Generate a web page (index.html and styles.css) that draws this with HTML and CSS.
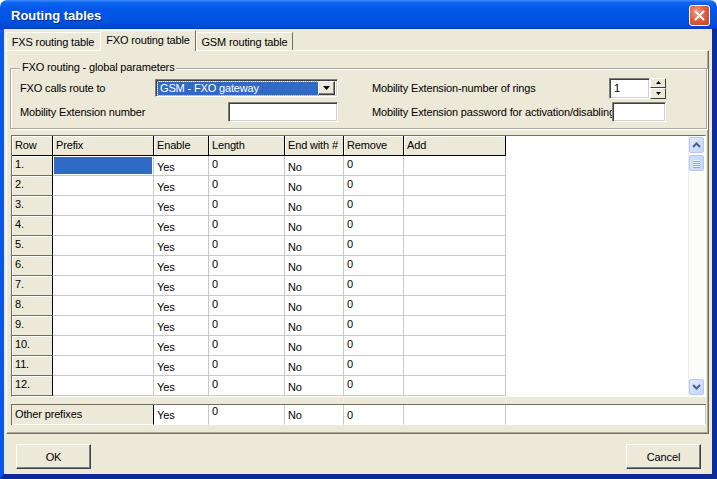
FILE: index.html
```html
<!DOCTYPE html>
<html>
<head>
<meta charset="utf-8">
<title>Routing tables</title>
<link rel="stylesheet" href="styles.css">
</head>
<body>
<div class="window">
  <div class="titlebar">
    <span class="title">Routing tables</span>
    <span class="close"><svg width="11" height="11" viewBox="0 0 11 11"><path d="M1.5 1.5 L9.5 9.5 M9.5 1.5 L1.5 9.5" stroke="#fff" stroke-width="2" stroke-linecap="round"/></svg></span>
  </div>
  <div class="frame">
    <div class="client">
      <div class="tabs">
        <div class="tab t1">FXS routing table</div>
        <div class="tab t2 active">FXO routing table</div>
        <div class="tab t3">GSM routing table</div>
      </div>
      <div class="panel">
        <div class="group">
          <span class="legend">FXO routing - global parameters</span>
          <div class="grow">
            <span class="lbl w135">FXO calls route to</span>
            <div class="combo">
              <span class="combo-sel">GSM - FXO gateway</span>
              <span class="combo-btn"><svg width="7" height="4" viewBox="0 0 7 4"><path d="M0 0 H7 L3.5 4 Z" fill="#000"/></svg></span>
            </div>
            <span class="lbl w237 ml">Mobility Extension-number of rings</span>
            <div class="spin">
              <div class="edit spin-edit">1</div>
              <div class="spin-btns">
                <span class="sbtn"><svg width="5" height="3" viewBox="0 0 5 3"><path d="M0 3 H5 L2.5 0 Z" fill="#000"/></svg></span>
                <span class="sbtn"><svg width="5" height="3" viewBox="0 0 5 3"><path d="M0 0 H5 L2.5 3 Z" fill="#000"/></svg></span>
              </div>
            </div>
          </div>
          <div class="grow">
            <span class="lbl w208">Mobility Extension number</span>
            <div class="edit w110"></div>
            <span class="lbl w240 ml clip">Mobility Extension password for activation/disabling</span>
            <div class="edit w54"></div>
          </div>
        </div>

        <div class="gridbox">
          <div class="gridarea">
            <div class="cells">
              <div class="h">Row</div><div class="h">Prefix</div><div class="h">Enable</div><div class="h">Length</div><div class="h">End with #</div><div class="h">Remove</div><div class="h">Add</div>

              <div class="n">1.</div><div class="c sel"></div><div class="c y">Yes</div><div class="c e">0</div><div class="c y">No</div><div class="c e">0</div><div class="c"></div>
              <div class="n">2.</div><div class="c"></div><div class="c y">Yes</div><div class="c e">0</div><div class="c y">No</div><div class="c e">0</div><div class="c"></div>
              <div class="n">3.</div><div class="c"></div><div class="c y">Yes</div><div class="c e">0</div><div class="c y">No</div><div class="c e">0</div><div class="c"></div>
              <div class="n">4.</div><div class="c"></div><div class="c y">Yes</div><div class="c e">0</div><div class="c y">No</div><div class="c e">0</div><div class="c"></div>
              <div class="n">5.</div><div class="c"></div><div class="c y">Yes</div><div class="c e">0</div><div class="c y">No</div><div class="c e">0</div><div class="c"></div>
              <div class="n">6.</div><div class="c"></div><div class="c y">Yes</div><div class="c e">0</div><div class="c y">No</div><div class="c e">0</div><div class="c"></div>
              <div class="n">7.</div><div class="c"></div><div class="c y">Yes</div><div class="c e">0</div><div class="c y">No</div><div class="c e">0</div><div class="c"></div>
              <div class="n">8.</div><div class="c"></div><div class="c y">Yes</div><div class="c e">0</div><div class="c y">No</div><div class="c e">0</div><div class="c"></div>
              <div class="n">9.</div><div class="c"></div><div class="c y">Yes</div><div class="c e">0</div><div class="c y">No</div><div class="c e">0</div><div class="c"></div>
              <div class="n">10.</div><div class="c"></div><div class="c y">Yes</div><div class="c e">0</div><div class="c y">No</div><div class="c e">0</div><div class="c"></div>
              <div class="n">11.</div><div class="c"></div><div class="c y">Yes</div><div class="c e">0</div><div class="c y">No</div><div class="c e">0</div><div class="c"></div>
              <div class="n">12.</div><div class="c"></div><div class="c y">Yes</div><div class="c e">0</div><div class="c y">No</div><div class="c e">0</div><div class="c"></div>
            </div>
          </div>
          <div class="sb">
            <div class="sb-btn"><svg width="9" height="6" viewBox="0 0 9 6"><path d="M1 5 L4.5 1.5 L8 5" fill="none" stroke="#4d6185" stroke-width="2"/></svg></div>
            <div class="sb-thumb"><span></span><span></span><span></span><span></span></div>
            <div class="sb-track"></div>
            <div class="sb-btn"><svg width="9" height="6" viewBox="0 0 9 6"><path d="M1 1 L4.5 4.5 L8 1" fill="none" stroke="#4d6185" stroke-width="2"/></svg></div>
          </div>
        </div>

        <div class="other">
          <div class="o-lbl">Other prefixes</div>
          <div class="c y">Yes</div>
          <div class="c e0">0</div>
          <div class="c y">No</div>
          <div class="c y">0</div>
          <div class="c"></div>
          <div class="c"></div>
        </div>
      </div>
      <div class="buttons">
        <div class="btn">OK</div>
        <div class="btn">Cancel</div>
      </div>
    </div>
  </div>
</div>
</body>
</html>
```
FILE: styles.css
```css
* { box-sizing: border-box; }
html, body { margin: 0; padding: 0; }
body {
  width: 717px;
  height: 479px;
  overflow: hidden;
  background: #ffffff;
  font-family: "Liberation Sans", Arial, sans-serif;
  font-size: 11px;
  letter-spacing: -0.15px;
  color: #000;
}

.window {
  width: 717px;
  height: 479px;
  display: flex;
  flex-direction: column;
}

.titlebar {
  height: 29px;
  flex: none;
  display: flex;
  align-items: center;
  justify-content: space-between;
  padding: 1px 7px 0 11px;
  border-radius: 7px 7px 0 0;
  background: linear-gradient(#3d8bf7 0%, #0a62ef 10%, #0257e6 35%, #0054e3 70%, #0148d3 92%, #003cbc 100%);
}
.title {
  color: #fff;
  font-weight: bold;
  font-size: 13px;
  letter-spacing: 0;
  text-shadow: 1px 1px 0 #0b2a8a;
}
.close {
  width: 21px;
  height: 21px;
  border: 1px solid #fff;
  border-radius: 3px;
  background: radial-gradient(circle at 35% 30%, #ee9a83 0%, #dc6242 45%, #c3401f 100%);
  display: flex;
  align-items: center;
  justify-content: center;
}

.frame {
  flex: 1;
  display: flex;
  flex-direction: column;
  background: #ECE9D8;
  border-left: 4px solid #0858e8;
  border-right: 5px solid #0a2b9e;
  border-bottom: 5px solid #0a2a96;
}

.client {
  flex: 1;
  display: flex;
  flex-direction: column;
  padding: 1px 3px 0 2px;
}

/* tabs */
.tabs {
  display: flex;
  height: 20px;
  align-items: flex-end;
}
.tab {
  height: 18px;
  display: flex;
  align-items: center;
  justify-content: center;
  background: #ECE9D8;
  border-top: 1px solid #fff;
  border-left: 1px solid #fff;
  border-right: 1px solid #716f64;
  padding-top: 1px;
}
.t1 { width: 94px; border-right-color: transparent; }
.t2 { width: 96px; }
.t3 { width: 97px; }
.tab.active {
  height: 21px;
  margin-bottom: -1px;
  padding-bottom: 3px;
  position: relative;
  z-index: 1;
}

.panel {
  height: 384px;
  border-top: 1px solid #fff;
  border-left: 1px solid #fff;
  border-right: 1px solid #716f64;
  border-bottom: 1px solid #716f64;
  box-shadow: inset -1px -1px 0 #aca899;
  display: flex;
  flex-direction: column;
}

/* group box */
.group {
  margin: 17px 1px 0 3px;
  height: 61px;
  border: 1px solid #aca899;
  box-shadow: inset 1px 1px 0 #fff, 1px 1px 0 #fff;
  position: relative;
  padding: 9px 0 0 9px;
}
.legend {
  position: absolute;
  top: -8px;
  left: 9px;
  padding: 0 2px;
  line-height: 13px;
  background: #ECE9D8;
}
.grow {
  display: flex;
  align-items: center;
  height: 20px;
}
.grow + .grow { margin-top: 4px; }
.lbl { white-space: nowrap; flex: none; }
.w135 { width: 135px; }
.w208 { width: 208px; }
.w237 { width: 237px; }
.w240 { width: 240px; }
.ml { margin-left: 34px; }
.clip { overflow: hidden; }

.edit {
  height: 20px;
  background: #fff;
  border-top: 1px solid #808080;
  border-left: 1px solid #808080;
  border-bottom: 1px solid #fff;
  border-right: 1px solid #fff;
  box-shadow: inset 1px 1px 0 #404040, inset -1px -1px 0 #d4d0c8;
  flex: none;
}
.w110 { width: 110px; }
.w54 { width: 54px; }

.combo {
  width: 183px;
  height: 18px;
  flex: none;
  display: flex;
  align-items: center;
  padding: 2px;
  background: #fff;
  border-top: 1px solid #808080;
  border-left: 1px solid #808080;
  border-bottom: 1px solid #fff;
  border-right: 1px solid #fff;
  box-shadow: inset 1px 1px 0 #404040, inset -1px -1px 0 #d4d0c8;
}
.combo-sel {
  flex: 1;
  height: 13px;
  line-height: 13px;
  background: #316ac5;
  color: #fff;
  padding-left: 2px;
  outline: 1px dotted #8fb0e8;
}
.combo-btn {
  width: 17px;
  height: 14px;
  display: flex;
  align-items: center;
  justify-content: center;
  background: #ECE9D8;
  border-top: 1px solid #fff;
  border-left: 1px solid #fff;
  border-right: 1px solid #404040;
  border-bottom: 1px solid #404040;
  box-shadow: inset -1px -1px 0 #808080;
}

.spin {
  display: flex;
  width: 57px;
  height: 21px;
  flex: none;
}
.spin-edit {
  width: 41px;
  height: 21px;
  padding: 2px 0 0 4px;
  line-height: 14px;
}
.spin-btns {
  width: 16px;
  display: flex;
  flex-direction: column;
}
.sbtn {
  flex: 1;
  display: flex;
  align-items: center;
  justify-content: center;
  background: #ECE9D8;
  border-top: 1px solid #fff;
  border-left: 1px solid #fff;
  border-right: 1px solid #404040;
  border-bottom: 1px solid #404040;
}

/* grid */
.gridbox {
  margin: 6px 2px 0 4px;
  height: 262px;
  border-top: 1px solid #716f64;
  border-left: 1px solid #716f64;
  border-right: 1px solid #fff;
  border-bottom: 1px solid #fff;
  background: #fff;
  display: flex;
}
.gridarea {
  flex: 1;
  overflow: hidden;
}
.cells {
  display: grid;
  grid-template-columns: 41px 101px 55px 76px 59px 60px 102px;
  grid-auto-rows: 20px;
  width: 494px;
}
.h {
  background: #ECE9D8;
  border-right: 1px solid #000;
  border-bottom: 1px solid #000;
  box-shadow: inset 1px 1px 0 #fff;
  padding: 3px 0 0 3px;
  line-height: 13px;
  white-space: nowrap;
}
.n {
  background: #ECE9D8;
  border-right: 1px solid #000;
  border-bottom: 1px solid #716f64;
  box-shadow: inset 1px 1px 0 #fff;
  padding: 2px 0 0 3px;
  line-height: 13px;
}
.c {
  background: #fff;
  border-right: 1px solid #c8c8c8;
  border-bottom: 1px solid #c8c8c8;
  padding-left: 3px;
  line-height: 13px;
  white-space: nowrap;
}
.c.y { padding-top: 5px; }
.c.e { padding-top: 2px; }
.c.sel {
  background: #316ac5;
  box-shadow: inset 0 0 0 1px #fff;
}

/* scrollbar */
.sb {
  width: 17px;
  flex: none;
  display: flex;
  flex-direction: column;
  padding: 1px 1px 1px 0;
  background: #fcfcfa;
  border-left: 1px solid #eeede5;
}
.sb-btn {
  height: 16px;
  flex: none;
  display: flex;
  align-items: center;
  justify-content: center;
  border: 1px solid #b9c8ef;
  border-radius: 2px;
  background: linear-gradient(135deg, #e3ebfd, #c4d3fa);
}
.sb-thumb {
  height: 16px;
  flex: none;
  margin-top: 2px;
  border: 1px solid #b9c8ef;
  border-radius: 2px;
  background: linear-gradient(90deg, #d4e0fb, #c6d5fb);
  display: flex;
  flex-direction: column;
  align-items: center;
  justify-content: center;
  gap: 1px;
}
.sb-thumb span {
  width: 7px;
  height: 1px;
  background: #eef3fe;
  box-shadow: 0 1px 0 #8ca5de;
}
.sb-track { flex: 1; }

/* other prefixes */
.other {
  margin: 7px 2px 0 4px;
  height: 21px;
  border-top: 1px solid #716f64;
  border-left: 1px solid #716f64;
  background: #fff;
  display: grid;
  grid-template-columns: 142px 55px 76px 59px 60px 102px 1fr;
}
.o-lbl {
  background: #ECE9D8;
  border-right: 1px solid #000;
  border-bottom: 1px solid #fff;
  padding: 3px 0 0 3px;
  line-height: 13px;
}
.other .c { border-bottom: 1px solid #fff; }
.other .c.y { padding-top: 4px; }
.other .c.e0 { padding-top: 0; }

/* buttons */
.buttons {
  flex: 1;
  display: flex;
  justify-content: space-between;
  align-items: flex-start;
  padding: 10px 8px 0 10px;
}
.btn {
  width: 75px;
  height: 25px;
  display: flex;
  align-items: center;
  justify-content: center;
  background: #ECE9D8;
  border-top: 1px solid #fff;
  border-left: 1px solid #fff;
  border-right: 1px solid #404040;
  border-bottom: 1px solid #404040;
  box-shadow: inset -1px -1px 0 #808080;
}
```
